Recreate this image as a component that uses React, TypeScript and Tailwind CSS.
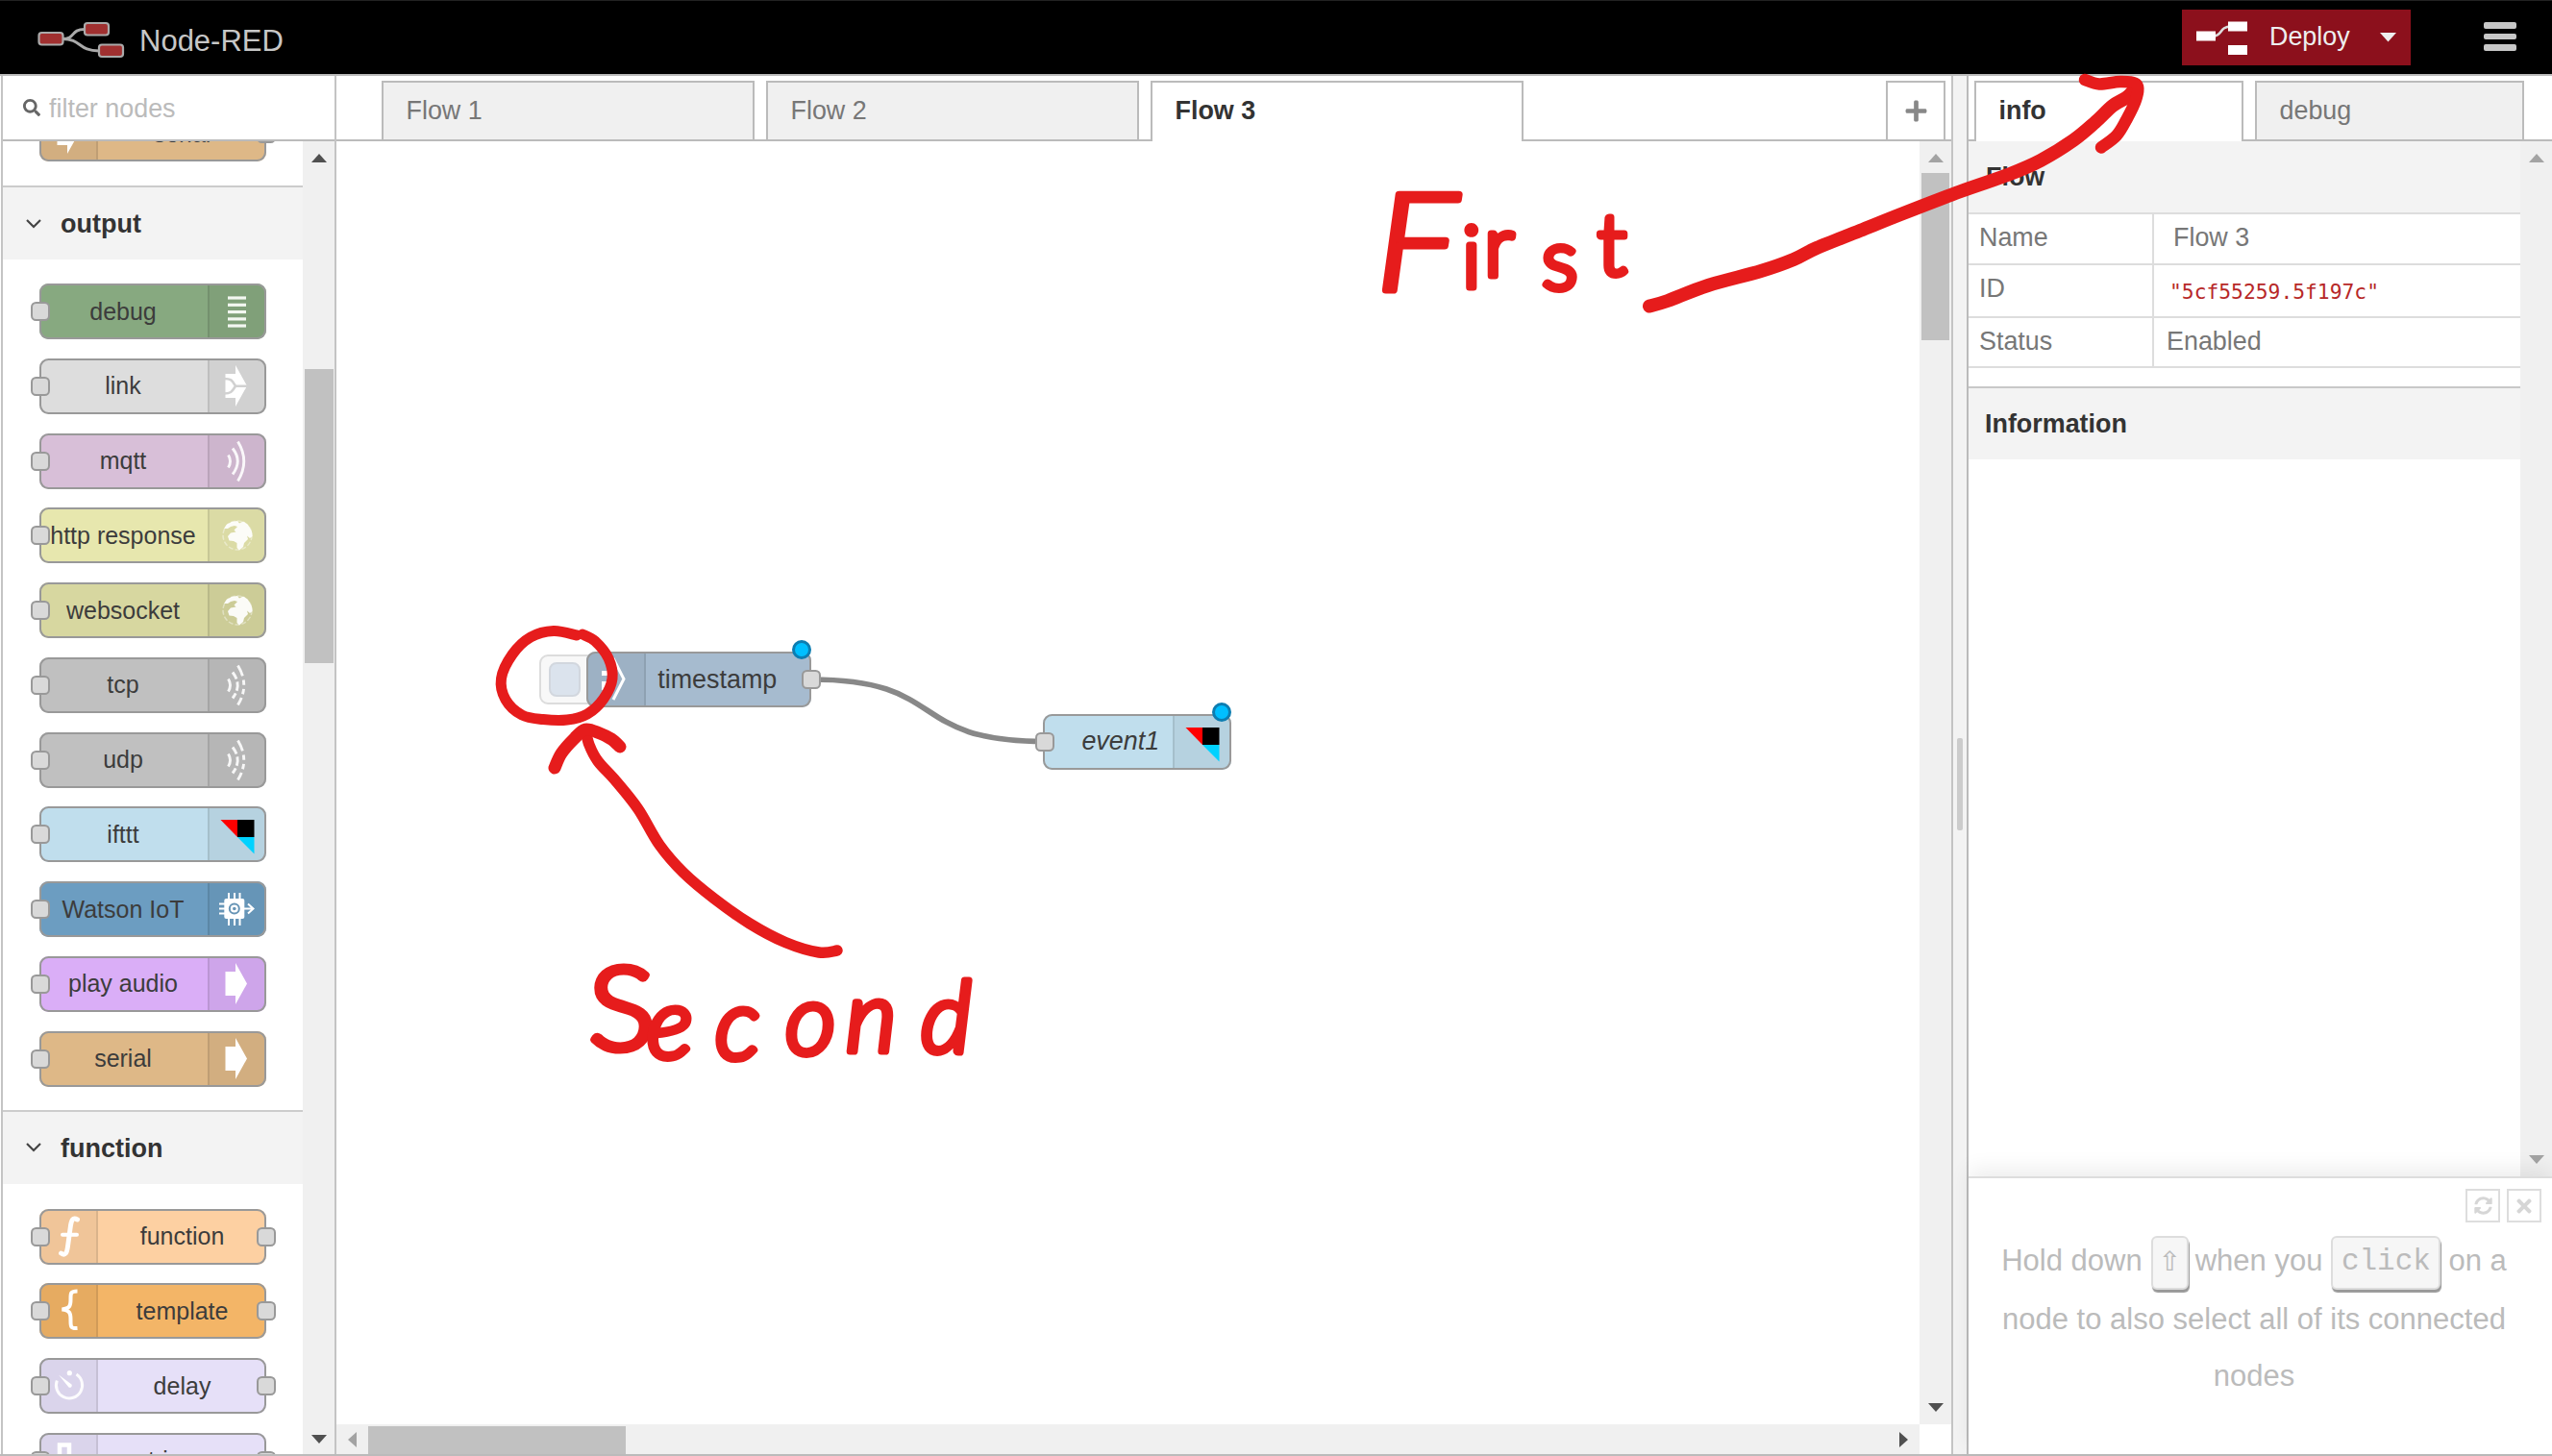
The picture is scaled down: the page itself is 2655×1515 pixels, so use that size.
import React from "react";
import { FaSearch, FaPlus, FaTimes, FaSyncAlt } from "react-icons/fa";

type IconName =
  | "debug" | "link" | "waves" | "dashes" | "globe" | "ifttt" | "chip" | "arrow"
  | "function" | "brace" | "timer" | "trigger" | "inject";

const ARROW = "M18.5 16 H29 V7 L41 28.5 L29 50 V41 H18.5 Z";

function NodeIcon({ name }: { name: IconName }) {
  const wave = (
    <>
      <path d="M21.5 22.5 Q25.5 29 21.5 35.5" />
      <path d="M26 15.5 Q36.5 29 26 42.5" strokeDasharray={name === "dashes" ? "8 3 9.5 3" : undefined} />
      <path d="M31.5 8.5 Q44 29 31.5 49.5" strokeDasharray={name === "dashes" ? "12 4 5.5 4 5.5 4" : undefined} />
    </>
  );
  return (
    <svg viewBox="0 0 60 58" className="block h-[58px] w-[60px] shrink-0" fill="none" stroke="none">
      {name === "debug" &&
        [15, 22.3, 29.6, 36.9, 44].map((y) => <rect key={y} x="21" y={y - 1.6} width="19" height="3.2" fill="#f3f7f1" />)}
      {name === "arrow" && <path d={ARROW} fill="#fff" />}
      {name === "link" && (
        <>
          <path d={ARROW} fill="#fff" />
          <path d="M17 21 C25 21 25.500 23 29 28.700 C25.500 34 25 36.500 17 36.500 M28 28.700 H42" stroke="#d1d1d1" strokeWidth="2.600" />
        </>
      )}
      {(name === "waves" || name === "dashes") && (
        <g stroke="#fff" strokeWidth="2.900" opacity="0.9">{wave}</g>
      )}
      {name === "globe" && (
        <>
          <circle cx="31" cy="29" r="15" stroke="#fff" strokeOpacity="0.4" strokeWidth="1.500" strokeDasharray="5 2" />
          <path
            d="M17 22 L20 17.500 L25 15 L31 14 L33 16.500 L37 14.500 L42 18 L46 25 L46.500 30 L44 32 L41 29.500 L42 33 L38 37 L37 41 L33 44.500 L30.500 42 L30.500 37 L27 35 L22.500 34.500 L21 30 L24 26.500 L29.500 25.500 L27.500 23.500 L31 20 L28 19 L24 20 L21 22 Z"
            fill="#fff"
            opacity="0.92"
          />
        </>
      )}
      {name === "ifttt" && (
        <>
          <path d="M13.500 14 H31 V32 Z" fill="#f00" />
          <path d="M31 14 H48.500 V32 H31 Z" fill="#000" />
          <path d="M31 32 H48.500 V49.500 Z" fill="#00d2ff" />
        </>
      )}
      {name === "chip" && (
        <>
          <rect x="17.300" y="18" width="21" height="21" rx="2" fill="#fff" />
          <path d="M22 12 V46 M28 12 V46 M33.500 12 V46 M12 23.500 H18 M12 28.500 H18 M12 33.500 H18" stroke="#fff" strokeWidth="2" />
          <path d="M38 28.500 H47 M42 23.500 L47.500 28.500 L42 33.500" stroke="#fff" strokeWidth="2" />
          <circle cx="27.800" cy="28.500" r="5" stroke="#6694b5" strokeWidth="2" />
          <circle cx="27.800" cy="28.500" r="1.800" fill="#6694b5" />
        </>
      )}
      {name === "function" && (
        <g stroke="#fff" strokeLinecap="round">
          <path d="M39.500 11 C35 8.500 33.500 11 32.500 17 L29.500 39 C28.500 46 27 49 22.500 46" strokeWidth="4.900" />
          <path d="M24 26.700 H39" strokeWidth="4" />
        </g>
      )}
      {name === "brace" && (
        <path d="M39.500 8.500 C32 8.500 32.500 11 32.500 17 C32.500 24 31.500 26.500 23.500 27.500 C31.500 28.500 32.500 31 32.500 38 C32.500 45 32 47.500 39.500 47" stroke="#fff" strokeWidth="4" />
      )}
      {name === "timer" && (
        <>
          <path d="M38.500 17 A13.600 13.600 0 1 1 18.300 23.500" stroke="#fff" strokeOpacity="0.9" strokeWidth="3" />
          <path d="M20 17.500 L33.500 27.500 A2.200 2.200 0 0 1 30.500 30.500 Z" fill="#fff" />
          <circle cx="31.300" cy="15.700" r="2.600" fill="#fff" />
        </>
      )}
      {name === "trigger" && <path d="M12 46 H21 V12.500 H31 V46 H44" stroke="#fff" strokeWidth="4.500" />}
      {name === "inject" && (
        <>
          <path d="M16 20 H23 V25 H16 Z M16 31 H26 V40 H16 Z" fill="#fff" />
          <path d="M28 7 L39 28.500 L28 50" stroke="#fff" strokeWidth="3" />
        </>
      )}
    </svg>
  );
}

function Port({ side }: { side: "left" | "right" }) {
  return (
    <span
      className={
        "absolute top-[19px] h-[20px] w-[20px] rounded-[5.500px] border-2 border-[#999] bg-[#d9d9d9] " +
        (side === "left" ? "-left-[8.500px]" : "-right-[10px]")
      }
    />
  );
}

type NodeProps = {
  label: string;
  color: string;
  icon: IconName;
  iconSide: "left" | "right";
  left?: boolean;
  right?: boolean;
  labelClass?: string;
};

function FlowNode({ label, color, icon, iconSide, left, right, labelClass = "text-[25px]" }: NodeProps) {
  return (
    <div className={"relative flex h-[58px] w-full items-center rounded-[9.500px] " + color + (iconSide === "left" ? " flex-row-reverse" : "")}>
      <span className={"flex-1 whitespace-nowrap text-center leading-[59px] text-[#3c3c3c] " + labelClass}>{label}</span>
      <span
        className={
          "h-[58px] w-[61.500px] bg-black/5 " +
          (iconSide === "left" ? "rounded-l-[9.500px] shadow-[inset_-2px_0_0_rgba(0,0,0,0.09)]" : "rounded-r-[9.500px] shadow-[inset_2px_0_0_rgba(0,0,0,0.09)]")
        }
      >
        <NodeIcon name={icon} />
      </span>
      <span className="absolute inset-0 rounded-[9.500px] border-2 border-[#999]" />
      {left && <Port side="left" />}
      {right && <Port side="right" />}
    </div>
  );
}

const outputs: NodeProps[] = [
  { label: "debug", color: "bg-[#87a980]", icon: "debug", iconSide: "right" },
  { label: "link", color: "bg-[#dddddd]", icon: "link", iconSide: "right" },
  { label: "mqtt", color: "bg-[#d8bfd8]", icon: "waves", iconSide: "right" },
  { label: "http response", color: "bg-[#e7e7ae]", icon: "globe", iconSide: "right" },
  { label: "websocket", color: "bg-[#d7d7a0]", icon: "globe", iconSide: "right" },
  { label: "tcp", color: "bg-[#c0c0c0]", icon: "dashes", iconSide: "right" },
  { label: "udp", color: "bg-[#c0c0c0]", icon: "dashes", iconSide: "right" },
  { label: "ifttt", color: "bg-[#c0deed]", icon: "ifttt", iconSide: "right" },
  { label: "Watson IoT", color: "bg-[#6c9dc1]", icon: "chip", iconSide: "right" },
  { label: "play audio", color: "bg-[#daaef7]", icon: "arrow", iconSide: "right" },
  { label: "serial", color: "bg-[#deb887]", icon: "arrow", iconSide: "right" },
];

const functions: NodeProps[] = [
  { label: "function", color: "bg-[#fdd0a2]", icon: "function", iconSide: "left" },
  { label: "template", color: "bg-[#f3b567]", icon: "brace", iconSide: "left" },
  { label: "delay", color: "bg-[#e6e0f8]", icon: "timer", iconSide: "left" },
  { label: "trigger", color: "bg-[#e6e0f8]", icon: "trigger", iconSide: "left" },
];

function Triangle({ dir, dark }: { dir: "up" | "down" | "left" | "right"; dark?: boolean }) {
  const d = { up: "M0 9 L8 0 L16 9 Z", down: "M0 0 H16 L8 9 Z", left: "M9 0 V16 L0 8 Z", right: "M0 0 V16 L9 8 Z" }[dir];
  const wide = dir === "up" || dir === "down";
  return (
    <svg className="block shrink-0" width={wide ? 16 : 9} height={wide ? 9 : 16} fill={dark ? "#505050" : "#a3a3a3"}>
      <path d={d} />
    </svg>
  );
}

function CategoryHeader({ title }: { title: string }) {
  return (
    <div className="flex h-[77px] shrink-0 items-center border-t-2 border-[#ccc] bg-[#f3f3f3] pl-6">
      <svg width="16" height="10" fill="none" stroke="#444" strokeWidth="2.200">
        <path d="M1 1 L8 8 L15 1" />
      </svg>
      <span className="ml-[20px] mt-[2px] text-[27px] font-bold leading-none text-[#333]">{title}</span>
    </div>
  );
}

function Palette() {
  return (
    <aside className="flex w-[349px] shrink-0 flex-col border-x-2 border-[#c4c4c4]">
      <div className="flex h-[68px] shrink-0 items-center border-b-2 border-[#bbb] pl-[21px]">
        <FaSearch className="h-[18px] w-[18px] text-[#666]" />
        <span className="ml-[9px] mt-[3px] text-[26.900px] leading-none text-[#bbb]">filter nodes</span>
      </div>
      <div className="flex min-h-0 flex-1">
        <div className="flex w-[312px] shrink-0 flex-col overflow-hidden">
          <div className="-mt-[37px] ml-[37.500px] w-[236.500px] shrink-0 pb-[25px]">
            <FlowNode label="serial" color="bg-[#deb887]" icon="arrow" iconSide="left" right />
          </div>
          <CategoryHeader title="output" />
          <div className="ml-[37.500px] flex w-[236.500px] shrink-0 flex-col gap-[19.750px] pb-[24px] pt-[25px]">
            {outputs.map((n) => (
              <FlowNode key={n.label} {...n} left />
            ))}
          </div>
          <CategoryHeader title="function" />
          <div className="ml-[37.500px] flex w-[236.500px] shrink-0 flex-col gap-[19.750px] pt-[26px]">
            {functions.map((n) => (
              <FlowNode key={n.label} {...n} left right />
            ))}
          </div>
        </div>
        <div className="flex flex-1 flex-col items-center bg-[#f0f0f0] pb-[11px] pt-[13px]">
          <Triangle dir="up" dark />
          <div className="mt-[215px] h-[306px] w-[30px] bg-[#c1c1c1]" />
          <div className="flex-1" />
          <Triangle dir="down" dark />
        </div>
      </div>
    </aside>
  );
}

function Tab({ label, active, className }: { label: string; active?: boolean; className: string }) {
  return (
    <div
      className={
        "relative flex items-center border-2 border-b-0 border-[#bbb] text-[26.900px] leading-none " +
        (active ? "-mb-[2px] h-[63px] bg-white pb-[3px] font-bold text-[#333] " : "h-[61px] bg-[#f0f0f0] pb-[1px] text-[#777] ") +
        className
      }
    >
      {label}
    </div>
  );
}

function Workspace() {
  return (
    <main className="flex w-[1682px] shrink-0 flex-col border-r-2 border-[#c4c4c4]">
      <div className="flex h-[68px] shrink-0 items-end gap-3 border-b-2 border-[#bbb] pl-[46.500px]">
        <Tab label="Flow 1" className="w-[388px] pl-6" />
        <Tab label="Flow 2" className="w-[388px] pl-6" />
        <Tab label="Flow 3" active className="w-[388px] pl-6" />
        <div className="ml-auto mr-[6px] flex h-[61px] w-[62px] items-center justify-center border-2 border-b-0 border-[#bbb] text-[#888]">
          <FaPlus className="h-[25px] w-[25px]" />
        </div>
      </div>
      <div className="flex min-h-0 flex-1">
        <div className="relative flex-1 overflow-hidden">
          <div className="absolute left-[211px] top-[534px] h-[52px] w-[60px] rounded-[9px] border-2 border-[#dcdcdc] bg-[#f8f8f8]">
            <div className="ml-[8px] mt-[6px] h-[36px] w-[33px] rounded-[8px] border-2 border-[#d2d7de] bg-[#dbe3ed]" />
          </div>
          <svg className="absolute left-0 top-0" width="1640" height="1330" fill="none">
            <path d="M494 560 C638 560 592 624.500 736 624.500" stroke="#888" strokeWidth="5.700" />
          </svg>
          <div className="absolute left-[260px] top-[531px] w-[234px]">
            <FlowNode label="timestamp" color="bg-[#a6bbcf]" icon="inject" iconSide="left" right labelClass="pr-[23px] text-[26.900px]" />
            <span className="absolute -top-[12px] right-0 h-5 w-5 rounded-full border-[3px] border-[#0d7db1] bg-[#00bfff]" />
          </div>
          <div className="absolute left-[735px] top-[595.500px] w-[196px]">
            <FlowNode label="event1" color="bg-[#c0deed]" icon="ifttt" iconSide="right" left labelClass="pl-[27px] text-[26.900px] italic" />
            <span className="absolute -top-[12px] right-0 h-5 w-5 rounded-full border-[3px] border-[#0d7db1] bg-[#00bfff]" />
          </div>
        </div>
        <div className="flex w-[33px] flex-col items-center bg-[#f0f0f0] pb-[13px] pt-[13px]">
          <Triangle dir="up" />
          <div className="mt-[11px] h-[174px] w-[29px] bg-[#c1c1c1]" />
          <div className="flex-1" />
          <Triangle dir="down" dark />
        </div>
      </div>
      <div className="flex h-[31px] shrink-0">
        <div className="flex flex-1 items-center bg-[#f0f0f0] pl-3 pr-3">
          <Triangle dir="left" />
          <div className="ml-[12px] mt-[2px] h-[29px] w-[268px] bg-[#c1c1c1]" />
          <div className="flex-1" />
          <Triangle dir="right" dark />
        </div>
        <div className="w-[33px] bg-white" />
      </div>
    </main>
  );
}

function Row({ name, height, children }: { name: string; height: string; children: React.ReactNode }) {
  return (
    <div className={"flex border-t-2 border-[#ddd] text-[26.900px] leading-[49px] text-[#777] " + height}>
      <div className="w-[193px] border-r-2 border-[#ddd] pl-[11px]">{name}</div>
      <div className="flex-1">{children}</div>
    </div>
  );
}

function Sidebar() {
  return (
    <aside className="flex min-w-0 flex-1 flex-col border-l-2 border-[#bbb]">
      <div className="flex h-[68px] shrink-0 items-end gap-[12px] border-b-2 border-[#bbb] pl-[5.500px]">
        <Tab label="info" active className="w-[280px] pl-6" />
        <Tab label="debug" className="w-[280px] pl-6" />
      </div>
      <div className="flex min-h-0 flex-1">
        <div className="flex w-[574px] shrink-0 flex-col">
          <div className="flex h-[74px] items-center bg-[#f3f3f3] pl-[18px] text-[26.900px] font-bold text-[#333]">Flow</div>
          <Row name="Name" height="h-[53px]"><span className="pl-[20px]">Flow 3</span></Row>
          <Row name="ID" height="h-[55px]">
            <span className="relative top-[3px] block pl-[16px] font-['DejaVu_Sans_Mono',monospace] text-[21.300px] text-[#b72828]">"5cf55259.5f197c"</span>
          </Row>
          <Row name="Status" height="h-[52px]"><span className="pl-[13px]">Enabled</span></Row>
          <div className="h-[21px] border-t-2 border-[#ddd]" />
          <div className="flex h-[76px] items-center border-t-2 border-[#c8c8c8] bg-[#f3f3f3] pl-[17px] text-[26.900px] font-bold text-[#333]">Information</div>
        </div>
        <div className="flex flex-1 flex-col items-center justify-between bg-[#f0f0f0] pb-[13px] pt-[13px]">
          <Triangle dir="up" />
          <Triangle dir="down" />
        </div>
      </div>
      <div className="relative flex h-[289px] shrink-0 flex-col border-t-2 border-[#ddd] bg-white shadow-[0_-8px_20px_rgba(0,0,0,0.07)]">
        <div className="flex justify-end gap-[7px] pr-[11px] pt-[11px]">
          <div className="flex h-[35px] w-[36px] items-center justify-center border-2 border-[#ddd] text-[#d6d6d6]">
            <FaSyncAlt className="h-[19px] w-[19px]" />
          </div>
          <div className="flex h-[35px] w-[36px] items-center justify-center border-2 border-[#ddd] text-[#d6d6d6]">
            <FaTimes className="h-[22px] w-[22px]" />
          </div>
        </div>
        <div className="flex flex-col items-center pr-[13px] text-[31px] text-[#bbb]">
          <div className="mt-[12px] flex h-[60px] items-start whitespace-nowrap leading-[57px]">
            <span className="-mt-[1px]">Hold down</span>
            <span className="ml-[9px] mt-[2px] flex h-[56px] w-[39px] items-center justify-center rounded-[6px] border-2 border-[#ddd] bg-[#f6f6f6] pb-1 font-['DejaVu_Sans',sans-serif] text-[28px] shadow-[1px_3px_1px_#999]">⇧</span>
            <span className="-mt-[1px] ml-[7px]">when you</span>
            <span className="ml-[9px] mt-[2px] flex h-[56px] w-[114px] items-center justify-center rounded-[6px] border-2 border-[#ddd] bg-[#f6f6f6] pb-1 font-['Liberation_Mono',monospace] shadow-[1px_3px_1px_#999]">click</span>
            <span className="-mt-[1px] ml-[8px]">on a</span>
          </div>
          <div className="mt-[-1px] whitespace-nowrap leading-[59px]">node to also select all of its connected</div>
          <div className="leading-[59px]">nodes</div>
        </div>
      </div>
    </aside>
  );
}

function Header() {
  return (
    <header className="flex h-[77px] shrink-0 items-center border-t border-[#222] bg-black">
      <svg className="ml-[39px] mt-[5px]" width="91" height="39" fill="none" stroke="#aaa" strokeWidth="2.200">
        <path d="M26 18.500 C40 18.500 34 8.500 49 8.500 M26 18.500 C46 18.500 42 31 64 31" strokeWidth="3" />
        <rect x="1.500" y="12" width="25" height="12.500" rx="3" fill="#a03030" />
        <rect x="49" y="2" width="25" height="12.500" rx="3" fill="#a03030" />
        <rect x="64" y="24.500" width="25" height="12.500" rx="3" fill="#a03030" />
      </svg>
      <span className="ml-[15px] mt-[6px] text-[31px] leading-none text-[#c7c7c7]">Node-RED</span>
      <div className="-mt-[1px] ml-auto flex h-[58px] w-[238px] items-center bg-[#8c101c]">
        <svg className="ml-[15px]" width="54" height="36" fill="#fff">
          <path d="M18 16.500 C27 16.500 24 6.500 36 6.500" fill="none" stroke="#ddd" strokeWidth="2.600" />
          <rect x="0" y="11.500" width="20" height="10" />
          <rect x="33" y="1.500" width="20" height="10" />
          <rect x="33" y="26" width="20" height="10" />
        </svg>
        <span className="ml-[22px] w-[84px] text-[26.900px] leading-none text-[#eee]">Deploy</span>
        <svg className="ml-[31px]" width="17" height="10" fill="#eee"><path d="M0 0 H17 L8.500 9.500 Z" /></svg>
      </div>
      <div className="-mt-[2px] ml-[76px] mr-[37px] flex w-[34px] flex-col gap-[5px]">
        <span className="h-[6.500px] rounded-[2px] bg-[#c7c7c7]" />
        <span className="h-[6.500px] rounded-[2px] bg-[#c7c7c7]" />
        <span className="h-[6.500px] rounded-[2px] bg-[#c7c7c7]" />
      </div>
    </header>
  );
}

type Point = [number, number];

/* Smooth curve through every point, the way a pen stroke runs. */
function penStroke(points: Point[]) {
  let d = `M${points[0][0]} ${points[0][1]}`;
  for (let i = 0; i < points.length - 1; i++) {
    const p0 = points[Math.max(i - 1, 0)];
    const p1 = points[i];
    const p2 = points[i + 1];
    const p3 = points[Math.min(i + 2, points.length - 1)];
    d += ` C${p1[0] + (p2[0] - p0[0]) / 6} ${p1[1] + (p2[1] - p0[1]) / 6} ${p2[0] - (p3[0] - p1[0]) / 6} ${p2[1] - (p3[1] - p1[1]) / 6} ${p2[0]} ${p2[1]}`;
  }
  return d;
}

const deployArrow: Point[] = [
  [1716, 318.5], [1735, 313], [1777, 297], [1832, 282], [1866, 270], [1890, 258], [1935, 240], [1980, 222], [2040, 199],
  [2090, 181.5], [2123, 167], [2157, 146], [2180, 127], [2198, 110], [2213, 101], [2222, 91],
];
const deployHead: Point[] = [[2169, 83], [2184, 87.5], [2206, 85], [2223, 88], [2222, 104], [2212, 125], [2202, 141], [2186, 153.5]];
const buttonRing: Point[] = [
  [600, 661], [576, 656.5], [552, 663], [533, 681], [521.5, 706], [526, 728], [543, 744], [565, 748.5], [590, 749],
  [611, 743], [628, 727], [637, 706], [633, 685], [619, 667], [606, 660],
];
const injectArrow: Point[] = [
  [871, 989], [852, 991], [817, 980.5], [780, 961], [743, 935], [711, 908], [686, 879], [664, 842], [641, 813], [622, 792], [613, 775], [609, 759],
];
const injectHead: Point[] = [[577, 799], [584, 784], [597, 769], [609, 759], [624, 763], [636, 769], [645, 777]];

/* Red marker notes drawn over the editor. */
function Annotations() {
  return (
    <svg className="pointer-events-none absolute left-0 top-0" width="2655" height="1515" fill="none" stroke="#e61c1c" strokeLinecap="round" strokeLinejoin="round">
      <path d={penStroke(deployArrow)} strokeWidth="14" />
      <path d={penStroke(deployHead)} strokeWidth="12.500" />
      <path d={penStroke(buttonRing)} strokeWidth="11" />
      <path d={penStroke(injectArrow)} strokeWidth="11.500" />
      <path d={penStroke(injectHead)} strokeWidth="13" />
      <g fill="#e61c1c" strokeWidth="7" fontFamily="Lato, sans-serif" fontWeight="300">
        <text fontSize="140" y="302" x="1432">
          <tspan fontStyle="italic" textLength="84" lengthAdjust="spacingAndGlyphs">F</tspan>
          <tspan fontSize="88" x="1521 1544 1604 1662" y="299 287 301 286">irst</tspan>
        </text>
        <text fontSize="120" y="1092" x="612">
          <tspan textLength="70" lengthAdjust="spacingAndGlyphs">S</tspan>
          <tspan fontSize="102" fontStyle="italic" x="673 744 817 880 958" y="1101 1102 1097 1094 1095">econd</tspan>
        </text>
      </g>
    </svg>
  );
}

export default function App() {
  return (
    <div className="relative flex h-[1515px] w-[2655px] flex-col overflow-hidden bg-white font-['Liberation_Sans',Arial,sans-serif]">
      <Header />
      <div className="flex min-h-0 flex-1 border-y-2 border-[#bbb] pl-px">
        <Palette />
        <Workspace />
        <div className="flex w-[14px] shrink-0 items-center justify-center bg-[#f3f3f3]">
          <div className="mt-[40px] h-[96px] w-[6px] rounded-[2px] bg-[#ccc]" />
        </div>
        <Sidebar />
      </div>
      <Annotations />
    </div>
  );
}
